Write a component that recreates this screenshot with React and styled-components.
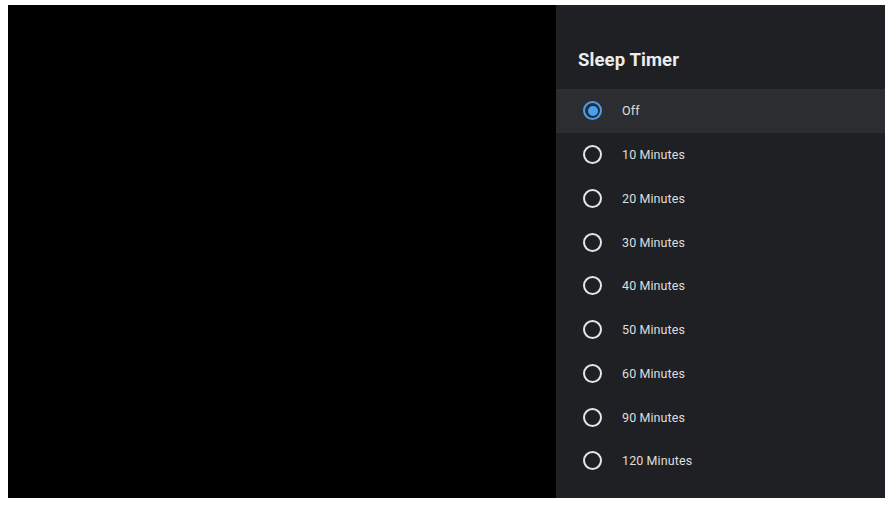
import React from "react";
import styled, { createGlobalStyle } from "styled-components";

const Global = createGlobalStyle`
  html, body { margin: 0; padding: 0; background: #ffffff; }
  body { font-family: Roboto, "Noto Sans", sans-serif; }
`;

const Frame = styled.div`
  width: 889px;
  height: 508px;
  box-sizing: border-box;
  padding: 5px 4px 10px 8px;
  display: flex;
`;

const Screen = styled.div`
  flex: 1;
  display: flex;
  background: #000;
`;

const Video = styled.div`
  flex: 1;
  background: #000;
`;

const Panel = styled.div`
  width: 329px;
  background: #1f2023;
  display: flex;
  flex-direction: column;
`;

const Title = styled.h1`
  margin: 0;
  height: 84px;
  box-sizing: border-box;
  padding: 44px 0 0 22px;
  font-size: 18.5px;
  font-weight: 700;
  color: #ececec;
  line-height: 22px;
  letter-spacing: 0.1px;
`;

const Row = styled.div`
  height: 43.75px;
  display: flex;
  align-items: center;
  padding-left: 27px;
  gap: 20px;
  background: ${(p) => (p.$selected ? "#2c2d30" : "transparent")};
`;

const Radio = styled.span`
  width: 19px;
  height: 19px;
  box-sizing: border-box;
  border-radius: 50%;
  border: 2px solid ${(p) => (p.$checked ? "#4a9ff5" : "#e6e6e6")};
  display: flex;
  align-items: center;
  justify-content: center;
  flex: none;
  &::after {
    content: "";
    display: ${(p) => (p.$checked ? "block" : "none")};
    width: 10px;
    height: 10px;
    border-radius: 50%;
    background: #4a9ff5;
  }
`;

const Label = styled.span`
  font-size: 12.5px;
  color: #dedede;
  letter-spacing: 0.1px;
`;

const options = [
  "Off",
  "10 Minutes",
  "20 Minutes",
  "30 Minutes",
  "40 Minutes",
  "50 Minutes",
  "60 Minutes",
  "90 Minutes",
  "120 Minutes",
];

export default function App() {
  return (
    <>
      <Global />
      <Frame>
        <Screen>
          <Video />
          <Panel>
            <Title>Sleep Timer</Title>
            {options.map((o, i) => (
              <Row key={o} $selected={i === 0}>
                <Radio $checked={i === 0} />
                <Label>{o}</Label>
              </Row>
            ))}
          </Panel>
        </Screen>
      </Frame>
    </>
  );
}
